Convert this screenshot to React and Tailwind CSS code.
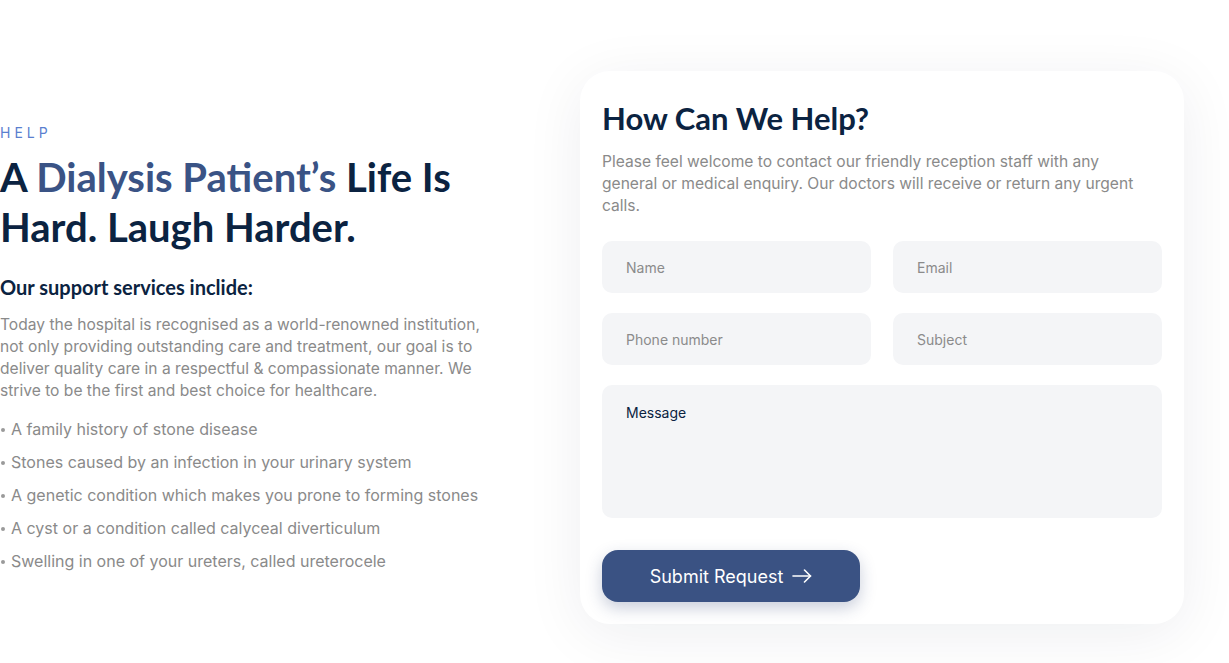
const services = [
  'A family history of stone disease',
  'Stones caused by an infection in your urinary system',
  'A genetic condition which makes you prone to forming stones',
  'A cyst or a condition called calyceal diverticulum',
  'Swelling in one of your ureters, called ureterocele',
];

const heading = { fontFamily: 'Lato, "Open Sans", sans-serif' };

const Field = ({ label }) => (
  <div className="h-[52px] rounded-[10px] bg-[#f4f5f7] px-6 flex items-center text-[14px] text-[#8b8b8b]">
    {label}
  </div>
);

const App = () => {
  return (
    <div className="min-h-screen bg-white font-['Inter',sans-serif]">
      <div className="flex items-center pt-[71px]">
        {/* left column */}
        <div className="w-[490px] shrink-0 pt-[2px]">
          <p className="text-[14px] tracking-[4px] text-[#5a7fcf] leading-4">HELP</p>
          <h1 className="mt-[11px] text-[40px] leading-[50px] font-bold text-[#0b2341]" style={heading}>
            A <span className="text-[#3a5385]">Dialysis Patient’s</span> Life Is
            <br />
            Hard. Laugh Harder.
          </h1>
          <h3 className="mt-[20px] text-[20px] font-bold text-[#0b2341]" style={heading}>
            Our support services inclide:
          </h3>
          <p className="mt-3 w-[490px] text-[15.6px] leading-[22px] text-[#8a8a8a]">
            Today the hospital is recognised as a world-renowned institution, not only providing outstanding care
            and treatment, our goal is to deliver quality care in a respectful &amp; compassionate manner. We strive
            to be the first and best choice for healthcare.
          </p>
          <ul className="mt-[16px] flex flex-col gap-[11px]">
            {services.map((s) => (
              <li key={s} className="flex items-center gap-[6px] text-[16px] leading-[22px] text-[#8a8a8a]">
                <span className="w-[4px] h-[4px] rounded-full bg-[#9a9a9a] ml-[1px] mt-[2px]"></span>
                {s}
              </li>
            ))}
          </ul>
        </div>

        {/* form card */}
        <div className="ml-[90px] w-[604px] rounded-[30px] bg-white px-[22px] pt-[27px] pb-[22px] shadow-[0_10px_60px_rgba(20,30,60,0.07)]">
          <h2 className="text-[31px] leading-[40px] font-bold text-[#0b2341]" style={heading}>
            How Can We Help?
          </h2>
          <p className="mt-[13px] max-w-[540px] text-[15.6px] leading-[22px] text-[#8a8a8a]">
            Please feel welcome to contact our friendly reception staff with any general or medical enquiry. Our
            doctors will receive or return any urgent calls.
          </p>
          <div className="mt-[24px] grid grid-cols-2 gap-x-[22px] gap-y-5">
            <Field label="Name" />
            <Field label="Email" />
            <Field label="Phone number" />
            <Field label="Subject" />
            <div className="col-span-2 h-[133px] rounded-[10px] bg-[#f4f5f7] px-6 pt-[17px] text-[14px] text-[#0b2341]">
              Message
            </div>
          </div>
          <button className="mt-8 h-[52px] w-[258px] rounded-[16px] bg-[#3a5283] text-white text-[18px] flex items-center justify-center gap-[9px] shadow-[0_6px_16px_rgba(40,60,110,0.25)]">
            Submit Request
            <svg width="20" height="14" viewBox="0 0 20 14" fill="none" stroke="currentColor" strokeWidth="1.6" strokeLinecap="round" strokeLinejoin="round">
              <path d="M1 7h17.5" />
              <path d="M12.5 1l6 6-6 6" />
            </svg>
          </button>
        </div>
      </div>
    </div>
  );
};

export default App;
